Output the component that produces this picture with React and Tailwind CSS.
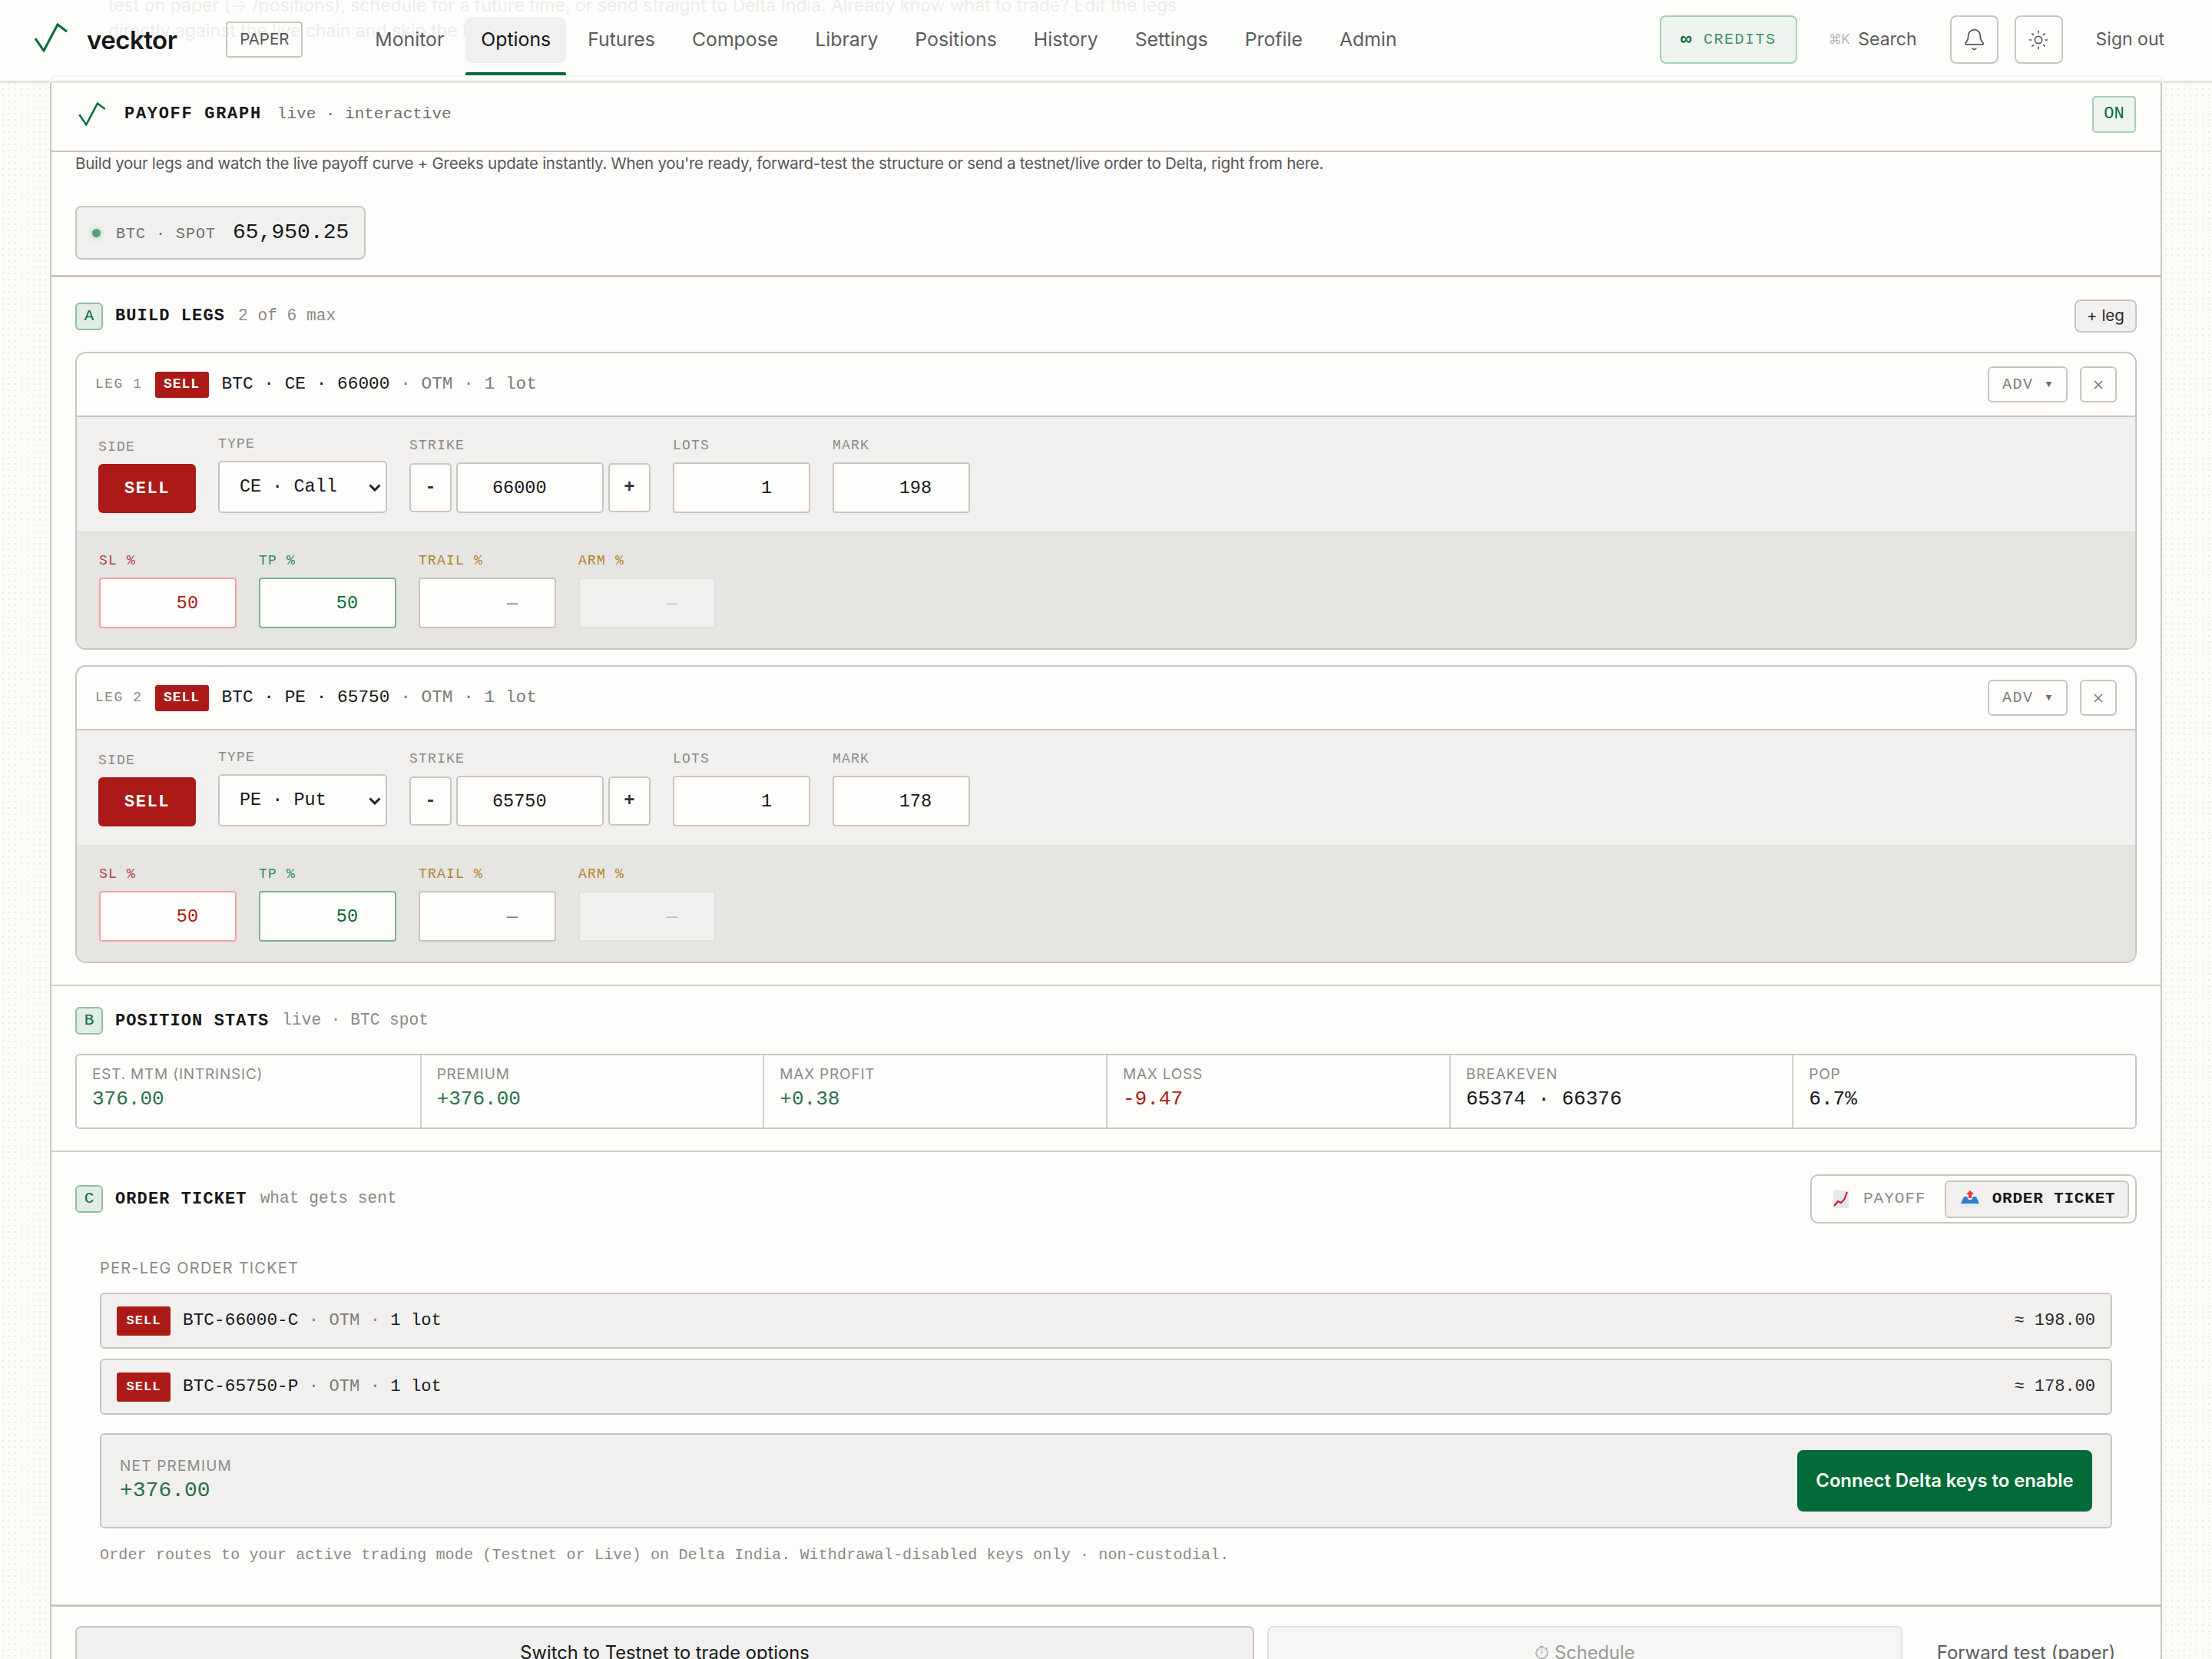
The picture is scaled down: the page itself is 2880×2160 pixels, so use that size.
import { Bell, Sun } from 'lucide-react';

const MONO = "font-['Liberation_Mono',monospace]";
const NAV = ['Monitor', 'Options', 'Futures', 'Compose', 'Library', 'Positions', 'History', 'Settings', 'Profile', 'Admin'];

const STATS = [
  { label: 'EST. MTM (INTRINSIC)', value: '376.00', color: 'text-[#2b6f4b]' },
  { label: 'PREMIUM', value: '+376.00', color: 'text-[#2b6f4b]' },
  { label: 'MAX PROFIT', value: '+0.38', color: 'text-[#2b6f4b]' },
  { label: 'MAX LOSS', value: '-9.47', color: 'text-[#ab1a16]' },
  { label: 'BREAKEVEN', value: '65374 · 66376', color: 'text-[#15171a]' },
  { label: 'POP', value: '6.7%', color: 'text-[#15171a]' },
];

const LEGS = [
  { n: 1, type: 'CE', option: 'CE · Call', strike: '66000', mark: '198' },
  { n: 2, type: 'PE', option: 'PE · Put', strike: '65750', mark: '178' },
];

const TICKETS = [
  { symbol: 'BTC-66000-C', price: '198.00' },
  { symbol: 'BTC-65750-P', price: '178.00' },
];

function Logo({ className }) {
  return (
    <svg viewBox="0 0 43 38" fill="none" className={className}>
      <path d="M1 20 L12 36 L30 2 L42 11" stroke="#036b38" strokeWidth="3" strokeLinejoin="miter" />
    </svg>
  );
}

function ChartEmoji() {
  return (
    <svg viewBox="0 0 20 23" className="h-[23px] w-[20px]">
      <rect width="20" height="23" fill="#e4e7ec" />
      <path d="M1 20 L6 14 L10 16 L14 12 L18 2" stroke="#c8171b" strokeWidth="2" fill="none" />
    </svg>
  );
}

function TrayEmoji() {
  return (
    <svg viewBox="0 0 24 22" className="h-[22px] w-[24px]">
      <path d="M12 0 L17 5 H14 V10 H10 V5 H7 Z" fill="#e8392d" />
      <path d="M4 8 H8 L10 12 H14 L16 8 H20 L24 17 H0 Z" fill="#2f7fd0" />
      <rect y="17" width="24" height="5" fill="#e6e9ee" />
    </svg>
  );
}

function SectionBadge({ letter }) {
  return (
    <span className={`${MONO} flex h-[36px] w-[36px] items-center justify-center rounded-[6px] border-2 border-[#8dbfa3] bg-[#e3ede7] text-[21px] text-[#036b38]`}>
      {letter}
    </span>
  );
}

function SectionTitle({ letter, title, sub }) {
  return (
    <div className="flex items-center">
      <SectionBadge letter={letter} />
      <span className={`${MONO} ml-[16px] text-[22px] font-bold tracking-[1.1px] text-[#15171a]`}>{title}</span>
      <span className={`${MONO} ml-[17px] text-[21.2px] text-[#8a8a88]`}>{sub}</span>
    </div>
  );
}

function SellBadge({ className }) {
  return (
    <span className={`${MONO} flex items-center justify-center rounded-[3px] bg-[#ab1a16] text-[18px] font-bold tracking-[1px] text-white ${className}`}>
      SELL
    </span>
  );
}

function Field({ label, labelClass = 'text-[#8a8a88]', children }) {
  return (
    <div className="flex flex-col">
      <span className={`${MONO} mb-[12px] h-[20px] text-[18px] leading-[20px] tracking-[1.2px] ${labelClass}`}>{label}</span>
      {children}
    </div>
  );
}

function NumberBox({ value, className = 'border-[#c8c6c0] bg-[#fefdfb] text-[#15171a]', disabled = false }) {
  return (
    <input
      readOnly
      disabled={disabled}
      value={value}
      className={`${MONO} h-[66px] w-[179px] rounded-[4px] border-2 pr-[48px] text-right text-[23.5px] outline-none ${className}`}
    />
  );
}

function LegCard({ leg }) {
  return (
    <div className="flex h-[388px] flex-col overflow-hidden rounded-[14px] border-2 border-[#c8c6c0] bg-[#fefdfb]">
      <div className="flex h-[83px] shrink-0 items-center border-b-2 border-[#c8c6c0] px-[24px]">
        <span className={`${MONO} text-[18px] tracking-[1.5px] text-[#8a8a88]`}>LEG {leg.n}</span>
        <SellBadge className="ml-[16px] h-[34px] w-[70px]" />
        <span className={`${MONO} ml-[17px] text-[22.8px] text-[#15171a]`}>BTC · {leg.type} · {leg.strike}</span>
        <span className={`${MONO} text-[22.8px] text-[#7c7c7a]`}>&nbsp;· OTM · 1 lot</span>
        <button className={`${MONO} ml-auto flex h-[47px] w-[104px] items-center justify-center gap-[16px] rounded-[6px] border-2 border-[#c8c6c0] text-[20px] tracking-[1.5px] text-[#7c7c7a]`}>
          ADV <span className="text-[13px] text-[#6f6f6d]">▼</span>
        </button>
        <button className="ml-[16px] flex h-[47px] w-[48px] items-center justify-center rounded-[6px] border-2 border-[#c8c6c0] text-[#6f6f6d]">
          <svg viewBox="0 0 12 12" className="h-[12px] w-[12px]"><path d="M1 1 L11 11 M11 1 L1 11" stroke="currentColor" strokeWidth="1.5" /></svg>
        </button>
      </div>

      <div className="flex h-[151px] shrink-0 items-end gap-[29px] border-b-2 border-[#e0dfdb] bg-[#f1f0ee] pb-[24px] pl-[28px]">
        <Field label="SIDE">
          <button className={`${MONO} h-[64px] w-[127px] rounded-[6px] bg-[#ab1a16] text-[22px] font-bold tracking-[1.5px] text-white`}>SELL</button>
        </Field>
        <Field label="TYPE">
          <div className="relative">
            <select className={`${MONO} h-[68px] w-[220px] appearance-none rounded-[5px] border-2 border-[#c8c6c0] bg-[#fefdfb] pl-[26px] text-[23.5px] text-[#15171a] outline-none`} defaultValue={leg.option}>
              <option>{leg.option}</option>
            </select>
            <svg viewBox="0 0 16 10" className="pointer-events-none absolute right-[8px] top-[30px] h-[10px] w-[16px]">
              <path d="M1.5 1.5 L8 8 L14.5 1.5" stroke="#222" strokeWidth="3" fill="none" />
            </svg>
          </div>
        </Field>
        <Field label="STRIKE">
          <div className="flex items-center gap-[6px]">
            <button className={`${MONO} h-[64px] w-[55px] rounded-[5px] border-2 border-[#c8c6c0] bg-[#fefdfb] text-[24px] font-bold text-[#333]`}>-</button>
            <input readOnly value={leg.strike} className={`${MONO} h-[66px] w-[192px] rounded-[5px] border-2 border-[#c8c6c0] bg-[#fefdfb] pl-[45px] text-[23.5px] text-[#15171a] outline-none`} />
            <button className={`${MONO} h-[64px] w-[55px] rounded-[5px] border-2 border-[#c8c6c0] bg-[#fefdfb] text-[24px] font-bold text-[#333]`}>+</button>
          </div>
        </Field>
        <Field label="LOTS"><NumberBox value="1" /></Field>
        <Field label="MARK"><NumberBox value={leg.mark} /></Field>
      </div>

      <div className="flex flex-1 items-end gap-[29px] bg-[#e6e5e2] pb-[26px] pl-[29px]">
        <Field label="SL %" labelClass="text-[#b5403c]">
          <NumberBox value="50" className="border-[#f3a1a1] bg-[#fefdfb] text-[#ab1a16]" />
        </Field>
        <Field label="TP %" labelClass="text-[#2f8a5a]">
          <NumberBox value="50" className="border-[#7bb296] bg-[#fefdfb] text-[#036b38]" />
        </Field>
        <Field label="TRAIL %" labelClass="text-[#b5832b]">
          <NumberBox value="—" className="border-[#c8c6c0] bg-[#fefdfb] text-[#777]" />
        </Field>
        <Field label="ARM %" labelClass="text-[#b5832b]">
          <NumberBox value="—" disabled className="border-[#e0e0dd] bg-[#f0f0ee] text-[#bdbdbb]" />
        </Field>
      </div>
    </div>
  );
}

function TicketRow({ ticket }) {
  return (
    <div className="flex h-[73px] items-center rounded-[6px] border-2 border-[#c8c6c0] bg-[#f1f0ee] px-[20px]">
      <SellBadge className="h-[38px] w-[70px] !text-[17px]" />
      <span className={`${MONO} ml-[16px] text-[22.8px] text-[#15171a]`}>{ticket.symbol}</span>
      <span className={`${MONO} text-[22.2px] text-[#7c7c7a]`}>&nbsp;· OTM ·&nbsp;</span>
      <span className={`${MONO} text-[22.2px] text-[#15171a]`}>1 lot</span>
      <span className={`${MONO} ml-auto text-[22px] text-[#2a2b2e]`}>≈ {ticket.price}</span>
    </div>
  );
}

export default function App() {
  return (
    <div className="relative h-[2160px] overflow-hidden bg-[#fbfbf8] bg-[radial-gradient(#eceae5_1px,transparent_1px)] bg-[size:8px_8px] font-['Inter',sans-serif] text-[#15171a]">
      <header className="relative flex h-[108px] items-start border-b-[3px] border-[#e4e3df] bg-[#fdfdfb] pl-[45px] pr-[62px] pt-[20px]">
        <div className="absolute left-[141px] top-[-9px] whitespace-nowrap text-[23px] leading-[33px] text-[#eeedea]">
          test on paper (→ /positions), schedule for a future time, or send straight to Delta India. Already know what to trade? Edit the legs
          <br />
          directly against the live chain and skip the h
        </div>
        <div className="absolute left-[65px] right-[63px] top-[98px] h-[10px] rounded-t-[8px] border-x-2 border-t-2 border-[#f3f3f0]" />

        <Logo className="relative mt-[10px] h-[38px] w-[43px] shrink-0" />
        <span className="relative ml-[25px] mt-[9px] text-[33px] font-semibold leading-[46px] tracking-[-0.5px] text-[#15171a]">vecktor</span>
        <span className="relative ml-[64px] mt-[8px] flex h-[47px] w-[100px] items-center justify-center rounded-[4px] border-2 border-[#c8c6c0] text-[20.5px] text-[#55565a]">PAPER</span>

        <nav className="relative ml-[74px] mt-[2px] flex gap-[8px]">
          {NAV.map((item) => (
            <a
              key={item}
              className={`relative flex h-[60px] items-center rounded-[8px] px-[20px] text-[24.8px] ${item === 'Options' ? 'bg-[#f1f0ee] text-[#15171a]' : 'text-[#5b5c5f]'}`}
            >
              {item}
              {item === 'Options' && <span className="absolute bottom-[-16px] left-0 right-0 h-[4px] rounded-t-[2px] bg-[#036b38]" />}
            </a>
          ))}
        </nav>

        <div className="relative ml-auto flex h-[63px] items-center">
          <div className={`${MONO} flex h-[63px] w-[179px] items-center justify-center gap-[14px] rounded-[8px] border-2 border-[#a7cfb8] bg-[#edf4ef] text-[20px] tracking-[1.5px] text-[#3f8f64]`}>
            <span className="text-[24px] font-bold leading-none text-[#036b38]">∞</span>CREDITS
          </div>
          <span className="ml-[41px] text-[17px] tracking-[-0.5px] text-[#b5b5b3]">⌘K</span>
          <span className="ml-[11px] text-[23px] text-[#5b5c5f]">Search</span>
          <button className="ml-[43px] flex h-[63px] w-[63px] items-center justify-center rounded-[8px] border-2 border-[#c8c6c0] text-[#55565a]">
            <Bell size={31} strokeWidth={1.4} />
          </button>
          <button className="ml-[21px] flex h-[63px] w-[63px] items-center justify-center rounded-[8px] border-2 border-[#c8c6c0] text-[#55565a]">
            <Sun size={28} strokeWidth={1.4} />
          </button>
          <span className="ml-[43px] text-[23px] text-[#5b5c5f]">Sign out</span>
        </div>
      </header>

      <main className="mx-[65px] border-x-2 border-[#c8c6c0] bg-[#fefdfb]">
        <div className="flex h-[90px] items-center border-b-2 border-[#c8c6c0] pb-[7px] pl-[35px] pr-[32px]">
          <Logo className="h-[31px] w-[36px]" />
          <span className={`${MONO} ml-[24px] text-[22px] font-bold tracking-[1.7px] text-[#15171a]`}>PAYOFF GRAPH</span>
          <span className={`${MONO} ml-[20px] text-[21px] text-[#6f6f6d]`}>live · interactive</span>
          <span className={`${MONO} ml-auto flex h-[48px] w-[57px] items-center justify-center rounded-[5px] border-2 border-[#a7cfb8] bg-[#edf4ef] text-[22px] text-[#036b38]`}>ON</span>
        </div>

        <div className="h-[163px] border-b-[3px] border-[#c8c6c0] pl-[31px]">
          <p className="text-[20.5px] leading-[30px] tracking-[-0.27px] text-[#55565a]">
            Build your legs and watch the live payoff curve + Greeks update instantly. When you're ready, forward-test the structure or send a testnet/live order to Delta, right from here.
          </p>
          <div className="mt-[40px] flex h-[70px] w-[378px] items-center rounded-[8px] border-2 border-[#c8c6c0] bg-[#f1f0ee] pl-[20px]">
            <span className="h-[11px] w-[11px] rounded-full bg-[#55a076] shadow-[0_0_8px_#9bcdb2]" />
            <span className={`${MONO} ml-[20px] mt-[4px] text-[20px] tracking-[1px] text-[#6f6f6d]`}>BTC · SPOT</span>
            <span className={`${MONO} ml-[22px] text-[28px] text-[#15171a]`}>65,950.25</span>
          </div>
        </div>

        <section className="h-[923px] border-b-2 border-[#d0cfca] px-[31px] pt-[29px]">
          <div className="flex h-[43px] items-center justify-between">
            <SectionTitle letter="A" title="BUILD LEGS" sub="2 of 6 max" />
            <button className="h-[43px] w-[81px] rounded-[8px] border-2 border-[#c8c6c0] bg-[#f1f0ee] text-[20.5px] text-[#2a2b2e]">+ leg</button>
          </div>
          <div className="mt-[25px] flex flex-col gap-[20px]">
            {LEGS.map((leg) => <LegCard key={leg.n} leg={leg} />)}
          </div>
        </section>

        <section className="h-[216px] border-b-2 border-[#d0cfca] px-[31px] pt-[27px]">
          <SectionTitle letter="B" title="POSITION STATS" sub="live · BTC spot" />
          <div className="mt-[25px] grid h-[98px] grid-cols-6 rounded-[6px] border-2 border-[#c8c6c0]">
            {STATS.map((s, i) => (
              <div key={s.label} className={`pl-[20px] pt-[13px] ${i ? 'border-l-2 border-[#d0cfca]' : ''}`}>
                <div className="text-[19px] leading-[24px] tracking-[0.8px] text-[#8a8a88]">{s.label}</div>
                <div className={`${MONO} mt-[4px] text-[26px] leading-[32px] ${s.color}`}>{s.value}</div>
              </div>
            ))}
          </div>
        </section>

        <section className="h-[592px] border-b-[3px] border-[#c8c6c0] px-[31px] pt-[29px]">
          <div className="flex h-[64px] items-center justify-between">
            <SectionTitle letter="C" title="ORDER TICKET" sub="what gets sent" />
            <div className="flex h-[64px] w-[425px] items-center rounded-[10px] border-2 border-[#c8c6c0] pl-[28px]">
              <ChartEmoji />
              <span className={`${MONO} ml-[19px] text-[21px] tracking-[1px] text-[#8a8a88]`}>PAYOFF</span>
              <div className="ml-[24px] flex h-[49px] w-[240px] items-center rounded-[6px] border-2 border-[#c8c6c0] bg-[#f1f0ee] pl-[19px]">
                <TrayEmoji />
                <span className={`${MONO} ml-[17px] text-[21px] font-bold tracking-[0.8px] text-[#15171a]`}>ORDER TICKET</span>
              </div>
            </div>
          </div>

          <div className="px-[32px]">
            <div className="mt-[46px] text-[20px] leading-[24px] tracking-[1.2px] text-[#8a8a88]">PER-LEG ORDER TICKET</div>
            <div className="mt-[20px] flex flex-col gap-[13px]">
              {TICKETS.map((t) => <TicketRow key={t.symbol} ticket={t} />)}
            </div>
            <div className="mt-[24px] flex h-[124px] items-center justify-between rounded-[6px] border-2 border-[#c8c6c0] bg-[#f1f0ee] px-[24px]">
              <div>
                <div className="text-[19px] leading-[24px] tracking-[1.2px] text-[#8a8a88]">NET PREMIUM</div>
                <div className={`${MONO} mt-[2px] text-[28px] leading-[36px] text-[#2b6f4b]`}>+376.00</div>
              </div>
              <button className="h-[80px] w-[384px] rounded-[8px] bg-[#036b38] text-[23.8px] font-semibold text-white">Connect Delta keys to enable</button>
            </div>
            <p className={`${MONO} mt-[21px] text-[20px] leading-[28px] tracking-[0.15px] text-[#8a8a88]`}>
              Order routes to your active trading mode (Testnet or Live) on Delta India. Withdrawal-disabled keys only · non-custodial.
            </p>
          </div>
        </section>

        <div className="flex gap-[17px] px-[31px] pt-[25px]">
          <button className="h-[70px] w-[1535px] rounded-[8px] border-2 border-[#c8c6c0] bg-[#f1f0ee] text-[23.7px] text-[#15171a]">Switch to Testnet to trade options</button>
          <button className="h-[70px] w-[827px] rounded-[8px] border-2 border-[#e3e2de] bg-[#f6f6f4] text-[23.7px] text-[#9a9a98]">⏱ Schedule</button>
          <button className="h-[70px] flex-1 text-[24px] text-[#5b5c5f]">Forward test (paper)</button>
        </div>
      </main>
    </div>
  );
}
